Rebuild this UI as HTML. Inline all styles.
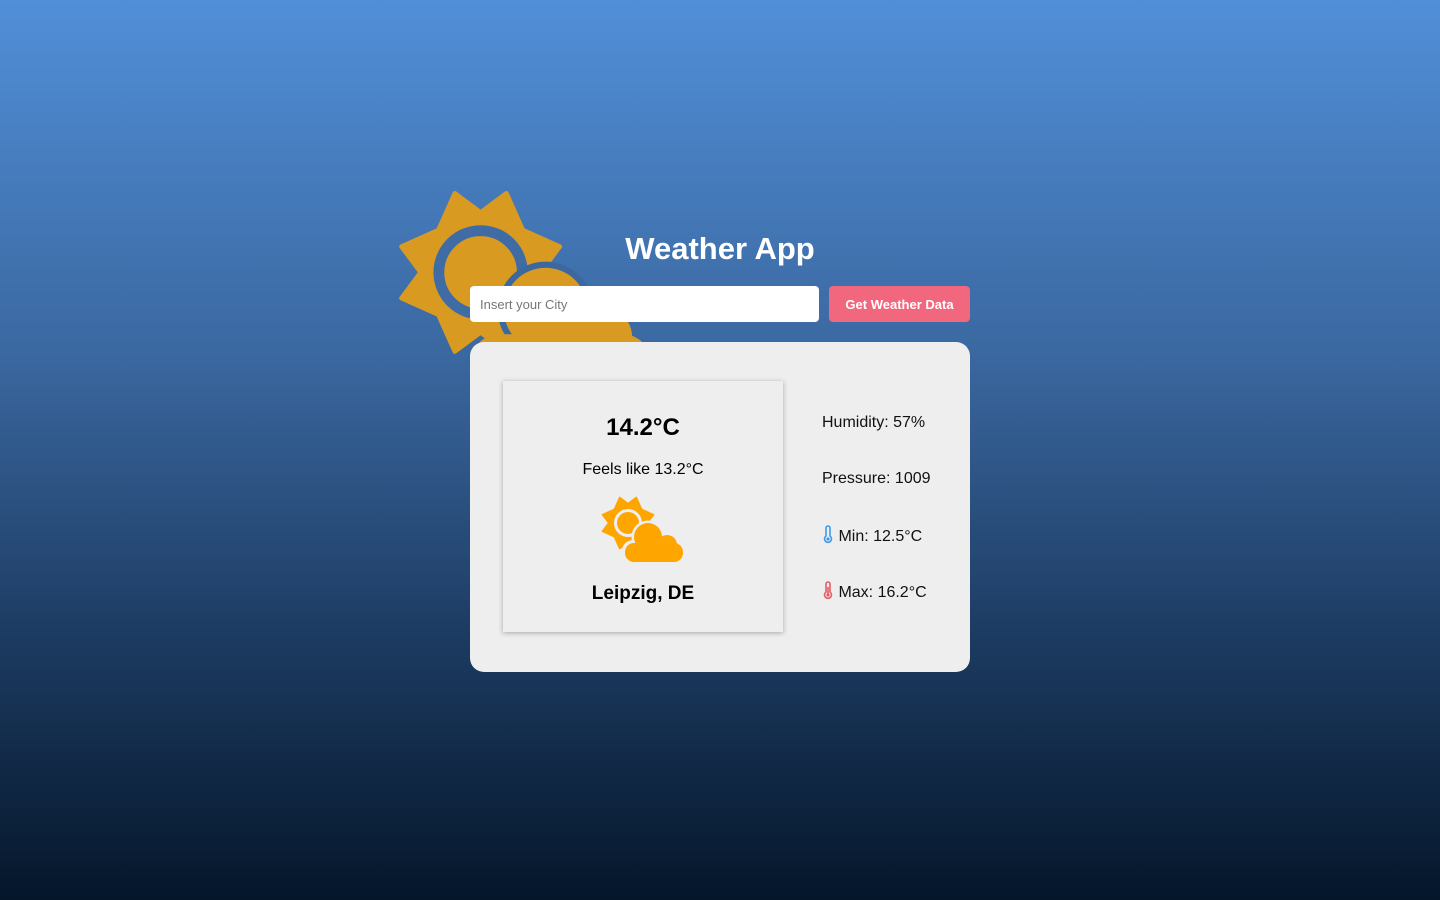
<!DOCTYPE html>
<html><head><meta charset="utf-8"><style>
*{margin:0;padding:0;box-sizing:border-box}
body{width:1440px;height:900px;overflow:hidden;background:linear-gradient(#518fd8,#3a679f 40%,#1d3c63 70%,#05162a);font-family:"Liberation Sans",sans-serif;position:relative}
svg{overflow:visible}
.big{position:absolute;left:400px;top:192px;width:254px;height:201px}
h1{position:absolute;left:0;width:1440px;top:231px;text-align:center;color:#fff;font-size:31px;font-weight:bold}
.inp{position:absolute;left:470px;top:286px;width:349px;height:36px;background:#fff;border-radius:4px;font-size:13px;color:#777;padding:11px 10px}
.btn{position:absolute;left:829px;top:286px;width:141px;height:36px;background:#f0677e;border-radius:4px;color:#fff;font-size:13px;font-weight:bold;text-align:center;line-height:37px}
.card{position:absolute;left:470px;top:342px;width:500px;height:330px;background:#eee;border-radius:14px}
.inner{position:absolute;left:503px;top:381px;width:280px;height:251px;background:#eee;box-shadow:0 1px 5px rgba(0,0,0,.3);text-align:center}
.t{position:absolute;width:100%;top:33px;font-size:24px;font-weight:bold}
.f{position:absolute;width:100%;top:80px;font-size:16px}
.c{position:absolute;width:100%;top:202px;font-size:19px;font-weight:bold}
.small{position:absolute;left:99px;top:116px;width:82px;height:65px}
.s{position:absolute;left:822px;font-size:16px;color:#111}
</style></head><body>
<svg class="big" viewBox="0 0 82 65">
<g transform="translate(26 26) scale(0.97)" fill="#d89a21" stroke="#d89a21" stroke-width="1.5" stroke-linejoin="round">
<polygon points="-8.6,-26.4 0,-20 8.6,-26.4 14.1,-14.1 26.4,-8.6 20,0 26.4,8.6 14.1,14.1 8.6,26.4 0,20 -8.6,26.4 -14.1,14.1 -26.4,8.6 -20,0 -26.4,-8.6 -14.1,-14.1"/>
</g>
<circle cx="26" cy="26" r="13.5" fill="none" stroke="#3f6ca4" stroke-width="3.5"/>
<circle cx="26" cy="26" r="9.5" fill="#d89a21"/>
<circle cx="47" cy="38" r="15.5" fill="#3c68a0"/>
<circle cx="47" cy="38" r="13.5" fill="#d89a21"/>
<circle cx="65" cy="47" r="10" fill="#d89a21"/>
<rect x="23" y="46" width="58" height="19" rx="9" fill="#d89a21"/>
</svg>
<h1>Weather App</h1>
<div class="inp">Insert your City</div>
<div class="btn">Get Weather Data</div>
<div class="card"></div>
<div class="inner">
<div class="t">14.2°C</div>
<div class="f">Feels like 13.2°C</div>
<svg class="small" viewBox="0 0 82 65">
<g transform="translate(26 26) scale(0.97)" fill="#ffa500" stroke="#ffa500" stroke-width="1.5" stroke-linejoin="round">
<polygon points="-8.6,-26.4 0,-20 8.6,-26.4 14.1,-14.1 26.4,-8.6 20,0 26.4,8.6 14.1,14.1 8.6,26.4 0,20 -8.6,26.4 -14.1,14.1 -26.4,8.6 -20,0 -26.4,-8.6 -14.1,-14.1"/>
</g>
<circle cx="26" cy="26" r="12.5" fill="none" stroke="#eee" stroke-width="3"/>
<circle cx="26" cy="26" r="9" fill="#ffa500"/>
<g fill="#eee"><circle cx="46" cy="40" r="16.5"/><circle cx="65" cy="47" r="12.5"/><rect x="20" y="43" width="64" height="24" rx="11"/></g>
<g fill="#ffa500"><circle cx="46" cy="40" r="14"/><circle cx="65" cy="48" r="10"/><rect x="23" y="46" width="58" height="19" rx="9"/></g>
</svg>
<div class="c">Leipzig, DE</div>
</div>
<div class="s" style="top:414px">Humidity: 57%</div>
<div class="s" style="top:470px">Pressure: 1009</div>
<div class="s" style="top:526px"><svg width="12" height="17" viewBox="0 0 12 17" style="vertical-align:-2px"><path d="M4 2a2 2 0 0 1 4 0v8a3.5 3.5 0 1 1-4 0z" fill="none" stroke="#3d9be9" stroke-width="1.6"/><circle cx="6" cy="13" r="1.6" fill="#3d9be9"/></svg> Min: 12.5°C</div>
<div class="s" style="top:582px"><svg width="12" height="17" viewBox="0 0 12 17" style="vertical-align:-2px"><path d="M4 2a2 2 0 0 1 4 0v8a3.5 3.5 0 1 1-4 0z" fill="none" stroke="#e35d66" stroke-width="1.6"/><rect x="5.2" y="5" width="1.6" height="7" fill="#e35d66"/><circle cx="6" cy="13" r="1.6" fill="#e35d66"/></svg> Max: 16.2°C</div>
</body></html>
